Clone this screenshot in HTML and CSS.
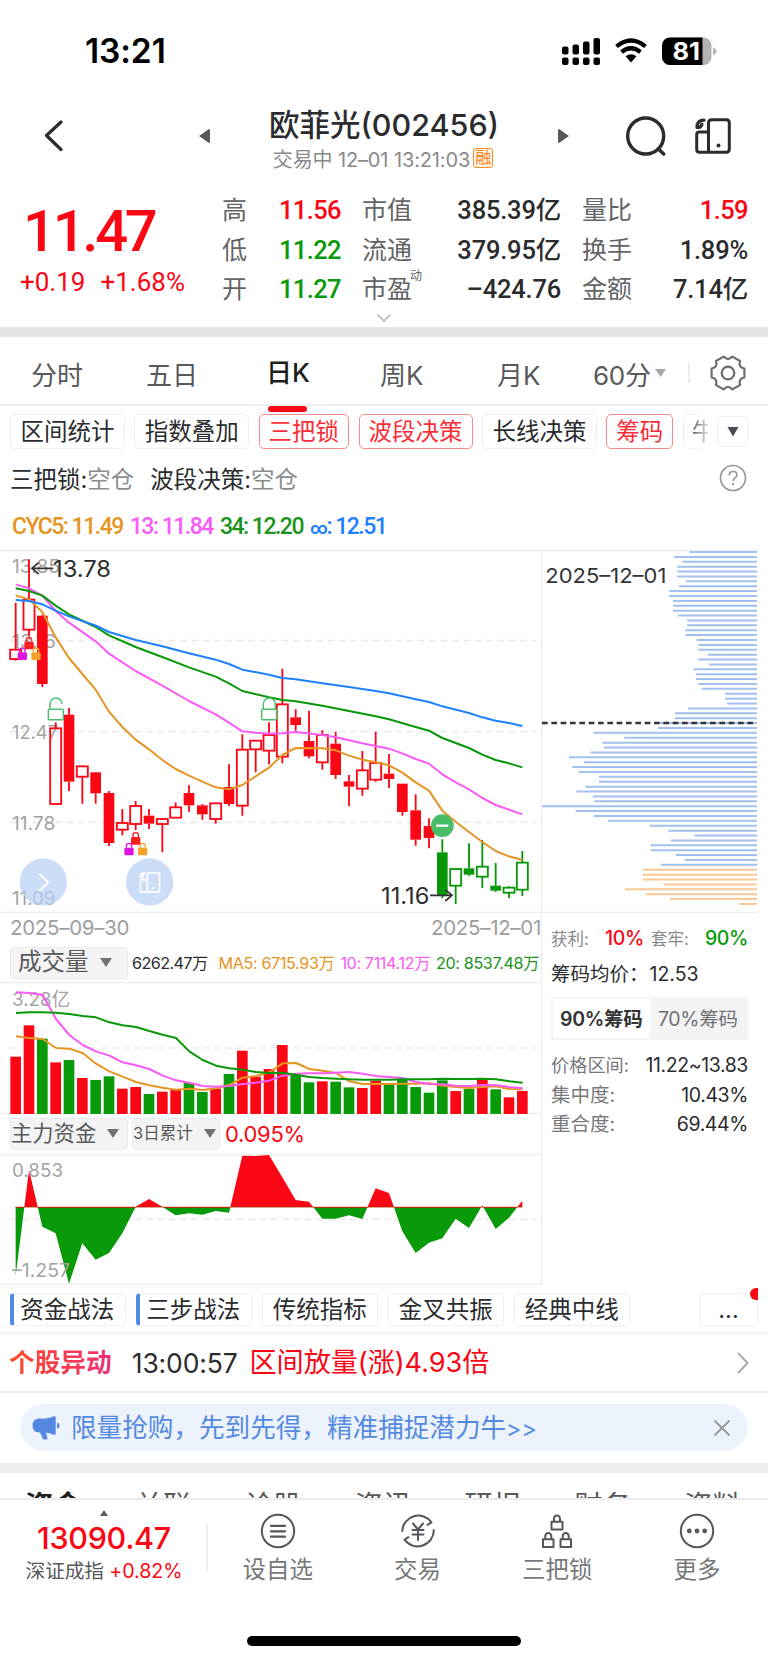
FILE: index.html
```html
<!DOCTYPE html>
<html lang="zh-CN">
<head>
<meta charset="utf-8">
<title>欧菲光(002456)</title>
<link rel="stylesheet" href="styles.css">
</head>
<body>
<svg class="defs" width="0" height="0">
  <symbol id="phones" viewBox="0 0 36 36">
    <path d="M13.500 14V5q0-3.200 3.200-3.200h14.600q3 0 3 3.200v26q0 3.200-3 3.200H4.700q-3 0-3-3V16.500q0-2.500 2.500-2.500h9.300v20" fill="none" stroke="currentColor" stroke-width="3"/>
    <path d="M2 9.500C2 4.500 4.500 2.200 9 2.200M2.500 9.300c2.500.5 4-.8 4.500-3.300" fill="none" stroke="currentColor" stroke-width="3.200" stroke-linecap="round"/>
    <circle cx="23.500" cy="27.500" r="2" fill="currentColor"/>
  </symbol>
</svg>

<div class="statusbar">
  <span class="clock">13:21</span>
  <svg class="status-icons" width="156" height="30" viewBox="0 0 156 30">
    <g fill="#000">
      <rect x="1" y="9.500" width="6.500" height="8" rx="2"/><rect x="11.500" y="7.500" width="6.500" height="10" rx="2"/><rect x="22" y="4.500" width="6.500" height="13" rx="2"/><rect x="32.500" y="1" width="6.500" height="16.500" rx="2"/>
      <rect x="1" y="20.500" width="6.500" height="7.500" rx="2"/><rect x="11.500" y="20.500" width="6.500" height="7.500" rx="2"/><rect x="22" y="20.500" width="6.500" height="7.500" rx="2"/><rect x="32.500" y="20.500" width="6.500" height="7.500" rx="2"/>
    </g>
    <path d="M55.500 9.500q14.500-12 29 0M60.500 15q9.500-7.500 19 0" fill="none" stroke="#000" stroke-width="4.200"/>
    <path d="M64.500 19.300q5.500-4.200 11 0L70 25.500z" fill="#000"/>
    <clipPath id="bat"><rect x="101" y="0.500" width="49.500" height="27.500" rx="8"/></clipPath>
    <g clip-path="url(#bat)"><rect x="101" width="50" height="29" fill="#b3b3b3"/><rect x="101" width="40.500" height="29" fill="#000"/></g>
    <path d="M152 10.500q3.500 1 3.500 3.700t-3.500 3.700z" fill="#b3b3b3"/>
    <text x="111.500" y="22.800" class="bat-text" textLength="27.500" lengthAdjust="spacingAndGlyphs">81</text>
  </svg>
</div>

<header class="header">
  <svg class="back" width="20" height="32" viewBox="0 0 20 32"><path d="M17 2L2.500 15.500 17 29.500" fill="none" stroke="#2b2c2e" stroke-width="3.200" stroke-linecap="round" stroke-linejoin="round"/></svg>
  <svg class="prev" width="12" height="16" viewBox="0 0 12 16"><path d="M0 8L9.500 1.200q1.500-.8 1.500 1v11.600q0 1.800-1.500 1z" fill="#58595b"/></svg>
  <div class="title">
    <h1>欧菲光(002456)</h1>
    <p><span>交易中 12–01 13:21:03</span><b class="rong">融</b></p>
  </div>
  <svg class="next" width="12" height="16" viewBox="0 0 12 16"><path d="M11 8L1.500 1.200Q0 .4 0 2.200v11.600q0 1.800 1.500 1z" fill="#58595b"/></svg>
  <svg class="search" width="40" height="40" viewBox="0 0 40 40"><g fill="none" stroke="#2b2c2e" stroke-width="3.400" stroke-linecap="round"><circle cx="19.700" cy="20" r="18"/><path d="M33 33.500l4.700 4.500"/></g></svg>
  <svg class="phones" width="36" height="36"><use href="#phones"/></svg>
</header>

<section class="quote">
  <div class="price">
    <strong>11.47</strong>
    <div><span>+0.19</span><span>+1.68%</span></div>
  </div>
  <div class="stats">
    <i>高</i><b class="r">11.56</b><i>市值</i><b>385.39亿</b><i>量比</i><b class="r">1.59</b>
    <i>低</i><b class="g">11.22</b><i>流通</i><b>379.95亿</b><i>换手</i><b>1.89%</b>
    <i>开</i><b class="g">11.27</b><i>市盈<sup>动</sup></i><b>–424.76</b><i>金额</i><b>7.14亿</b>
  </div>
</section>
<div class="expander"><svg width="14" height="8" viewBox="0 0 14 8"><path d="M.8.8L7 7 13.200.8" fill="none" stroke="#aaa" stroke-width="1.400"/></svg></div>
<div class="band"></div>

<nav class="periods">
  <span>分时</span><span>五日</span><span class="on">日K</span><span>周K</span><span>月K</span>
  <span class="min">60分<svg width="11" height="9" viewBox="0 0 11 9"><path d="M0 0h11L5.500 8z" fill="#aaa"/></svg></span>
  <em></em>
  <svg class="gear" width="36" height="36" viewBox="-18 -18 36 36"><g fill="none" stroke="#6c6d70" stroke-width="2.200"><path stroke-linejoin="round" d="M16.400-4.400V4.400Q10 5.800 12 12L4.400 16.400Q0 11.500-4.400 16.400L-12 12Q-10 5.800-16.400 4.400V-4.400Q-10-5.800-12-12L-4.400-16.400Q0-11.500 4.400-16.400L12-12Q10-5.800 16.400-4.400z"/><circle r="6.300"/></g></svg>
</nav>

<div class="chips">
  <span>区间统计</span><span>指数叠加</span><span class="sel">三把锁</span><span class="sel">波段决策</span><span>长线决策</span><span class="sel">筹码</span>
  <span class="cut">牛</span>
  <span class="drop"><svg width="12" height="10" viewBox="0 0 12 10"><path d="M.5 0h11L6 9.500z" fill="#4a4b50"/></svg></span>
</div>

<div class="lockstate">
  <span>三把锁:<i>空仓</i></span><span>波段决策:<i>空仓</i></span>
  <svg width="28" height="28" viewBox="0 0 28 28"><circle cx="14" cy="14" r="12.500" fill="none" stroke="#999" stroke-width="1.700"/><path d="M10.300 11.400q0-3.900 3.800-3.900t3.800 3.500q0 1.700-2 3-1.800 1.200-1.800 3" fill="none" stroke="#999" stroke-width="1.700"/><circle cx="14.100" cy="20" r="1.200" fill="#999"/></svg>
</div>

<div class="cyc">
  <span class="o">CYC5: 11.49</span><span class="p">13: 11.84</span><span class="gr">34: 12.20</span><span class="bl"><small>∞</small>: 12.51</span>
</div>

<main class="board">
  <div class="left">
    <svg id="kline" class="kline" width="542" height="363" viewBox="0 15 1626 1089"></svg>
    <div class="dates"><span>2025–09–30</span><span>2025–12–01</span></div>
    <div class="bar vbar">
      <span class="sel1 big">成交量<svg width="12" height="9" viewBox="0 0 12 9"><path d="M0 0h12L6 9z" fill="#707173"/></svg></span>
      <span class="k">6262.47万</span><span class="o">MA5: 6715.93万</span><span class="p">10: 7114.12万</span><span class="gr">20: 8537.48万</span>
    </div>
    <svg id="volume" class="volume" width="542" height="132" viewBox="0 216 1626 396"></svg>
    <div class="bar mbar">
      <span class="sel1">主力资金<svg width="12" height="9" viewBox="0 0 12 9"><path d="M0 0h12L6 9z" fill="#707173"/></svg></span>
      <span class="sel2">3日累计<svg width="12" height="9" viewBox="0 0 12 9"><path d="M0 0h12L6 9z" fill="#707173"/></svg></span>
      <span class="pct">0.095%</span>
    </div>
    <svg id="money" class="money" width="542" height="131" viewBox="0 132 1626 393"></svg>
  </div>
  <aside class="right">
    <svg id="dist" class="dist" width="216" height="363" viewBox="36 15 648 1089"></svg>
    <div class="info">
      <div class="pl"><i>获利:</i><b class="r">10%</b><i>套牢:</i><b class="g">90%</b></div>
      <div class="avg"><span>筹码均价：</span><span>12.53</span></div>
      <div class="seg"><b>90%筹码</b><span>70%筹码</span></div>
      <dl>
        <dt class="tight">价格区间:</dt><dd>11.22~13.83</dd>
        <dt>集中度:</dt><dd>10.43%</dd>
        <dt>重合度:</dt><dd>69.44%</dd>
      </dl>
    </div>
  </aside>
</main>

<div class="methods">
  <span class="hot">资金战法</span><span class="hot">三步战法</span><span>传统指标</span><span>金叉共振</span><span>经典中线</span>
  <span class="more">...<u></u></span>
</div>

<div class="alert">
  <strong>个股异动</strong><time>13:00:57</time><span>区间放量(涨)4.93倍</span>
  <svg width="12" height="22" viewBox="0 0 12 22"><path d="M1 1l9.500 10L1 21" fill="none" stroke="#aaa" stroke-width="2"/></svg>
</div>

<div class="promo-wrap"><div class="promo">
  <svg width="28" height="24" viewBox="0 0 28 24"><path d="M7 2.500C13 3 18 2 22 .3q1.700-.6 1.700 1v16.400q0 1.600-1.700 1-3.500-1.600-8-1.900l1.500 5.200q.3 1.500-1.200 1.500h-2q-1.200 0-1.700-1.200L8 16.500H7q-6.500-.5-6.500-7t6.500-7z" fill="#5389e0"/><path d="M25 6.500q2.500.5 2.500 3T25 12.500z" fill="#5389e0"/></svg>
  <span>限量抢购，先到先得，精准捕捉潜力牛<small>&gt;&gt;</small></span>
  <svg width="18" height="18" viewBox="0 0 18 18"><path d="M1.500 1.500l15 15M16.500 1.500l-15 15" stroke="#999" stroke-width="2"/></svg>
</div></div>
<div class="band low"></div>

<div class="subtabs"><b>资金</b><span>关联</span><span>诊股</span><span>资讯</span><span>研报</span><span>财务</span><span>资料</span></div>

<footer class="tabbar">
  <div class="index">
    <svg width="8" height="6" viewBox="0 0 8 6"><path d="M4 0l4 6H0z" fill="#58595b"/></svg>
    <strong>13090.47</strong>
    <p>深证成指 <b>+0.82%</b></p>
  </div>
  <div class="tab"><svg width="36" height="36" viewBox="-18 -18 36 36"><g class="ln"><circle r="16.200"/><path d="M-7-5.200H7M-7 .3H7M-7 5.700H7" stroke-width="2.300"/></g></svg><span>设自选</span></div>
  <div class="tab"><svg width="36" height="36" viewBox="-18 -18 36 36"><g class="ln"><path d="M-15.800 0A16.200 16.200 0 0 1 13.500-8.700l-4 2.500M15.800-1A16.200 16.200 0 0 1-13.500 8.700l4-2.500"/><path d="M-5-7.500L0-1.500 5-7.500M0-1.500V9M-5.500-1H5.500M-5.500 3.500H5.500"/></g></svg><span>交易</span></div>
  <div class="tab"><svg width="36" height="36" viewBox="-18 -18 36 36"><g class="ln"><path d="M-5.500-9.200H5.500V-1.500H-5.500zM-3-9.200v-3a3 3.200 0 0 1 6 0v3M-14 8.300H-3.500V16H-14zM-11.700 8.300v-3a3 3.200 0 0 1 6 0v3M3.500 8.300H14V16H3.500zM5.700 8.300v-3a3 3.200 0 0 1 6 0v3"/></g></svg><span>三把锁</span></div>
  <div class="tab"><svg width="36" height="36" viewBox="-18 -18 36 36"><g class="ln"><circle r="16.200"/></g><g fill="#55565b"><circle cx="-7.700" r="2.400"/><circle r="2.400"/><circle cx="7.700" r="2.400"/></g></svg><span>更多</span></div>
</footer>
<div class="home"></div>
<script src="charts.js"></script>
</body>
</html>
```

FILE: charts.js
```js
const RED = '#fa0614', GREEN = '#089708', ORANGE = '#e59524', PINK = '#fa5af5', BLUE = '#1f80ff';
const cx = i => 47 + 40 * i;
const line = (pts, c, w = 6) => `<polyline points="${pts.map(p => p.join()).join(' ')}" fill="none" stroke="${c}" stroke-width="${w}" stroke-linejoin="round"/>`;
const dash = y => `<path d="M30 ${y}H1612" stroke="#ebebee" stroke-width="5" stroke-dasharray="20 14"/>`;
const text = (s, x, y, size, len, c = '#a3a3a5') => `<text x="${x}" y="${y}" font-size="${size}" textLength="${len}" lengthAdjust="spacingAndGlyphs" fill="${c}">${s}</text>`;
const lock = (x, y, c) => `<g fill="${c}"><rect x="${x - 14}" y="${y}" width="28" height="23" rx="4"/><path d="M${x - 8} ${y}v-5a8 8 0 0 1 16 0v5" fill="none" stroke="${c}" stroke-width="4"/></g>`;
const locks = (x, y) => lock(x, y, '#fa1e1e') + lock(x - 20, y + 32, '#dc14dc') + lock(x + 21, y + 32, '#f5a228');

// [style, high, body top, body bottom, low]
const candles = [
  ['h',173,314,342,347],['h',43,164,254,272],['f',209,212,417,426],['h',532,550,777,777],['f',489,509,710,738],
  ['h',662,664,695,776],['f',682,682,745,776],['f',738,744,894,903],['h',792,834,854,871],['h',768,783,837,855],
  ['f',792,812,836,852],['h',820,822,837,922],['h',772,787,818,818],['f',721,744,781,800],['f',777,781,808,824],
  ['h',775,775,822,836],['f',658,726,777,783],['h',568,614,782,812],['h',586,587,613,682],['h',532,570,617,658],
  ['h',371,478,635,655],['f',493,517,540,557],['f',497,588,634,640],['h',556,570,652,674],['f',560,596,690,702],
  ['f',690,709,725,784],['h',618,676,731,752],['h',560,654,704,710],['f',627,686,702,729],['f',716,716,801,812],
  ['f',748,796,884,902],['f',820,843,879,910],['F',883,922,1050,1060],['H',970,972,1022,1077],['F',895,970,989,993],
  ['H',885,965,995,1029],['F',954,1022,1037,1041],['H',1024,1028,1043,1060],['H',918,953,1034,1053]];
const ma = {
  blue: [[47,165],[87,168],[127,178],[167,197],[207,214],[290,243],[327,261],[407,285],[487,304],[567,325],[647,344],[687,357],[727,374],[807,389],[847,399],[887,403],[967,415],[1047,426],[1127,438],[1167,445],[1247,463],[1287,471],[1327,484],[1407,504],[1447,517],[1487,527],[1527,534],[1567,543]],
  green: [[47,130],[87,138],[127,152],[167,182],[207,208],[287,246],[327,271],[407,306],[487,336],[567,367],[647,395],[687,415],[727,438],[807,457],[847,465],[887,469],[967,482],[1047,498],[1127,514],[1167,523],[1247,546],[1287,557],[1327,579],[1407,609],[1447,629],[1487,645],[1527,655],[1567,667]],
  pink: [[47,118],[87,130],[127,152],[167,198],[207,233],[287,289],[327,326],[407,378],[487,422],[567,468],[647,508],[687,533],[727,559],[767,563],[807,566],[847,565],[887,561],[967,570],[1007,577],[1087,595],[1167,611],[1207,625],[1247,642],[1287,656],[1327,688],[1367,712],[1407,733],[1447,759],[1487,780],[1567,808]],
  orange: [[47,151],[87,163],[127,201],[167,277],[207,339],[247,387],[287,434],[327,500],[367,546],[407,584],[447,613],[487,645],[527,672],[567,692],[607,710],[647,727],[687,733],[727,720],[767,694],[807,668],[847,630],[887,609],[967,610],[1007,616],[1047,632],[1087,644],[1127,652],[1167,661],[1207,683],[1247,712],[1287,737],[1327,797],[1367,830],[1407,861],[1447,891],[1487,918],[1527,934],[1567,945]]
};
const frame = (y0, y1) => `<path d="M0 ${y0 + 1.5}H1626M0 ${y1 - 1.5}H1626" stroke="#ececee" stroke-width="4"/>`;

let s = frame(15, 1104) + dash(287) + dash(560) + dash(832);
s += text('13.85', 36, 83, 57, 144) + text('13.16', 36, 309, 57, 132) + text('12.47', 36, 583, 57, 138) + text('11.78', 36, 855, 57, 130) + text('11.09', 36, 1080, 57, 130);
candles.forEach(([t, hi, a, b, lo], i) => {
  const x = cx(i), c = t === t.toUpperCase() ? GREEN : RED, fill = t.toLowerCase() === 'f';
  s += `<path d="M${x} ${hi}V${a}M${x} ${b}V${lo}" stroke="${c}" stroke-width="5.500"/>`;
  s += fill ? `<rect x="${x - 16}" y="${a}" width="32" height="${b - a}" fill="${c}"/>`
            : `<rect x="${x - 16.5}" y="${a}" width="33" height="${b - a}" fill="none" stroke="${c}" stroke-width="5.500"/>`;
});
s += line(ma.pink, PINK) + line(ma.green, GREEN) + line(ma.orange, ORANGE) + line(ma.blue, BLUE);
s += locks(87, 290) + locks(407, 876);
[167, 807].forEach((x, k) => {
  s += `<g fill="none" stroke="#4cc06c" stroke-width="4.500"><rect x="${x - 22}" y="493" width="45" height="31" rx="3"/><path d="M${x - 17} 493v-16a18 18 0 0 1 36 0v${k ? 16 : 0}"/></g>`;
});
s += `<circle cx="1327" cy="842" r="34" fill="#47bd66"/><path d="M1309 842h36" stroke="#fff" stroke-width="7"/>`;
s += `<path d="M160 70H96M116 53L96 70l20 17" fill="none" stroke="#333" stroke-width="5"/>` + text('13.78', 159, 97, 68, 174, '#2c2d2f');
s += text('11.16', 1143, 1076, 68, 145, '#2c2d2f') + `<path d="M1290 1051h66M1336 1034l20 17-20 17" fill="none" stroke="#333" stroke-width="5"/>`;
s += `<g fill="#b9d0f5" fill-opacity=".72"><circle cx="130" cy="1011" r="71"/><circle cx="449" cy="1011" r="71"/></g><path d="M118 986l27 26-27 26" fill="none" stroke="#fff" stroke-width="6"/><use href="#phones" x="418" y="980" width="64" height="64" style="color:#fff"/>`;
document.getElementById('kline').innerHTML = s;

const bars = [440,346,386,457,450,504,510,499,536,531,552,545,537,519,546,536,492,422,500,477,405,494,517,514,515,532,534,512,521,510,531,548,511,543,537,508,538,562,543];
const barColors = 'rrgrgrggrrgrrggrgrrrrggrggrrgggggrgrgrr';
const vol = {
  orange: [379,384,387,414,416,429,461,484,500,516,526,533,539,536,540,535,525,503,498,487,460,459,477,482,489,514,522,521,522,521,521,520,527,531,534,531,529,537,538],
  pink: [247,249,255,327,375,405,424,437,457,466,477,497,511,518,528,530,528,522,518,512,497,491,490,490,488,486,491,498,501,504,516,522,523,527,528,525,526,531,535],
  green: [309,307,307,308,312,318,322,337,346,351,363,374,384,424,450,467,475,479,486,489,488,494,501,504,506,508,509,509,509,508,508,508,506,507,507,506,508,514,518]
};
s = frame(216, 612) + dash(414) + text('3.28亿', 36, 288, 57, 175);
bars.forEach((y, i) => { s += `<rect x="${cx(i) - 16}" y="${y}" width="32" height="${612 - y}" fill="${barColors[i] === 'r' ? RED : '#089a08'}"/>`; });
const byIndex = a => a.map((y, i) => [cx(i) + 1, y]);
s += line(byIndex(vol.orange), ORANGE) + line(byIndex(vol.pink), PINK) + line(byIndex(vol.green), GREEN);
document.getElementById('volume').innerHTML = s;

const flow = [498,180,350,370,521,400,449,429,370,290,267,290,316,310,314,303,308,137,138,135,202,270,275,326,326,316,327,235,249,364,429,398,385,326,354,286,357,323,272];
const area = `M47 291L${flow.map((y, i) => [cx(i), y].join()).join(' ')}L1567 291z`;
s = frame(132, 525) + dash(328);
s += `<clipPath id="up"><rect y="130" width="1626" height="163"/></clipPath><clipPath id="dn"><rect y="290" width="1626" height="240"/></clipPath>`;
s += `<path d="${area}" fill="#089a08" clip-path="url(#dn)"/><path d="${area}" fill="${RED}" clip-path="url(#up)"/><path d="M47 291.500H1567" stroke="#a33a08" stroke-width="2"/>`;
s += text('0.853', 36, 201, 57, 153) + text('–1.257', 36, 502, 57, 174);
document.getElementById('money').innerHTML = s;

const dist = [478,432,457,441,441,441,468,447,417,417,429,429,429,444,471,471,466,466,500,505,505,534,505,537,490,498,498,505,515,585,585,591,474,435,435,385,384,191,283,217,222,181,117,162,127,147,207,207,166,139,189,193,36,137,191,234,359,415,493,423,363,363,437,464,393,339,339,339,401,285,349,420,627];
s = `<path d="M36 16.500H684M36 1102.500H684" stroke="#ececee" stroke-width="4"/>`;
dist.forEach((x, i) => { s += `<path d="M${x} ${21 + 14.665 * i}H681" stroke="${i < 65 ? '#a2c1f1' : '#fcc796'}" stroke-width="6"/>`; });
s += `<path d="M36 534H676" stroke="#333" stroke-width="7" stroke-dasharray="17 11"/>` + text('2025–12–01', 46, 113, 62, 363, '#333436');
document.getElementById('dist').innerHTML = s;
```

FILE: styles.css
```css
* { box-sizing: border-box; }
body { margin: 0; width: 768px; height: 1663px; overflow: hidden; background: #fff; color: #2b2c2e; font-family: Inter, "Noto Sans CJK SC", sans-serif; font-size: 23.5px; }
i, em { font-style: normal; }
svg { display: block; flex: none; }
.defs { position: absolute; }
h1, p, dl, dd { margin: 0; }
.r { color: #fa0614; }
.g { color: #089a08; }
.o { color: #e59524; }
.p { color: #fa5af5; }
.gr { color: #1c931c; }
.bl { color: #1f80ff; }

.statusbar { height: 100px; display: flex; justify-content: space-between; padding: 37px 51px 0 85px; color: #000; }
.clock { font-weight: 600; font-size: 33.5px; line-height: 29px; letter-spacing: -.1px; }
.bat-text { font: 700 24px Inter, sans-serif; fill: #fff; }

.header { height: 90px; display: grid; grid-template-columns: 44px 167px 49px 248px 50px 68px 69px 73px; align-items: start; }
.header > * { grid-row: 1; }
.back { margin-top: 20px; grid-column: 2; }
.prev { margin-top: 28px; grid-column: 2; justify-self: end; }
.title { grid-column: 4; text-align: center; white-space: nowrap; }
.title h1 { font-weight: 500; font-size: 30.5px; line-height: 45px; margin-top: 2px; }
.title p { display: flex; justify-content: center; align-items: center; height: 22px; padding-right: 2px; font-size: 20px; color: #88898b; letter-spacing: -.12px; }
.rong { width: 20px; height: 20px; margin-left: 3px; border: 1.5px solid #fa8c28; border-radius: 3px; color: #fa8420; font-size: 16px; line-height: 16px; font-weight: 400; letter-spacing: 0; background: #fff3e6; }
.next { margin-top: 28px; grid-column: 6; }
.search { margin-top: 16px; grid-column: 7; }
.phones { margin-top: 18px; grid-column: 8; color: #2b2c2e; }

.quote { height: 119px; display: flex; font-family: Roboto, "Noto Sans CJK SC", sans-serif; }
.price { width: 222px; color: #fa0614; padding-left: 20px; }
.price strong { display: block; font-weight: 500; font-size: 58px; line-height: 60px; margin: 11px 0 0 3px; letter-spacing: -3.3px; }
.price div { display: flex; gap: 15px; margin-top: 6px; font-size: 26px; line-height: 30px; letter-spacing: 0; }
.stats { display: grid; grid-template-columns: 50px 69px 102px 118px 102px 85px; grid-auto-rows: 39.5px; align-items: center; line-height: 39px; padding-top: 1px; }
.stats i { color: #636466; font-size: 25px; position: relative; }
.stats i:not(:nth-child(6n+1)) { padding-left: 21px; }
.stats b { font-weight: 500; font-size: 25.5px; text-align: right; letter-spacing: -.2px; white-space: nowrap; }
.stats .r, .stats .g { letter-spacing: -.6px; }
.stats sup { position: absolute; left: 69px; top: -9px; font-size: 12px; line-height: 30px; }
.expander { height: 18px; display: flex; justify-content: center; padding-top: 5px; }
.band { height: 10px; background: #e5e5e8; }
.band.low { background: #ededef; }

.periods { height: 69px; border-bottom: 2px solid #efeff1; display: grid; grid-template-columns: 31px 115px 120px 114px 117px 96px 95px 22px 58px; align-items: center; color: #58595b; font-size: 26px; padding-top: 1px; }
.periods span:first-child { grid-column: 2; }
.periods .on { color: #1d1e20; font-weight: 500; position: relative; align-self: stretch; line-height: 70px; }
.periods .on::after { content: ""; position: absolute; left: 2px; bottom: -4px; width: 39px; height: 6px; border-radius: 3px; background: #fa0614; }
.periods .min { display: flex; align-items: center; gap: 4px; letter-spacing: -.3px; }
.periods em { width: 2px; height: 20px; background: #ececee; }

.chips { height: 51px; padding: 8px 20px 0 10px; display: flex; gap: 9.5px; line-height: 34px; white-space: nowrap; }
.chips span { height: 35px; border: 1.5px solid #efeff0; border-radius: 5px; padding: 0 9.4px; }
.chips .sel { color: #fa2d38; border-color: #fb8a90; padding: 0 9px; }
.chips .cut { width: 25px; padding: 0 0 0 8px; overflow: hidden; border-right: 0; border-radius: 5px 0 0 5px; -webkit-mask: linear-gradient(90deg, #000 10%, transparent 115%); mask: linear-gradient(90deg, #000 10%, transparent 115%); }
.chips .drop { width: 31px; height: 31px; margin: 2px 0 0 auto; padding: 0; display: flex; align-items: center; justify-content: center; }

.lockstate { height: 42px; padding: 0 21px 0 10px; display: flex; align-items: center; gap: 16px; white-space: nowrap; }
.lockstate i { color: #8b8c8e; }
.lockstate svg { margin-left: auto; }
.cyc { height: 51px; padding: 4px 0 0 12px; display: flex; align-items: center; gap: 7px; font: 500 23px Roboto, "Noto Sans CJK SC", sans-serif; letter-spacing: -1.5px; white-space: pre; }
.cyc small { font-size: 17px; font-weight: 700; }

.board { display: flex; height: 735px; }
.board svg text { font-family: Inter, "Noto Sans CJK SC", sans-serif; }
.left { width: 542px; border-right: 1.5px solid #ececee; }
.right { width: 216px; }
.dates { height: 33px; display: flex; justify-content: space-between; padding: 0 0 0 10px; line-height: 30px; font-size: 20.5px; color: #9d9ea0; letter-spacing: -.3px; }
.bar { display: flex; padding-left: 10px; white-space: nowrap; }
.vbar { height: 36px; padding-top: 1px; font-size: 16.2px; line-height: 32px; letter-spacing: -.38px; }
.sel1, .sel2 { flex: none; height: 32px; padding-bottom: 2px; background: #f4f4f5; border: 1px solid #ececee; border-radius: 4px; color: #58595b; display: flex; align-items: center; line-height: 28px; letter-spacing: 0; }
.sel1 { width: 118px; font-size: 21.3px; gap: 11px; }
.sel1.big { font-size: 23.5px; padding-left: 7px; gap: 11px; }
.sel2 { width: 88px; margin-left: 4px; font-size: 16.5px; gap: 11px; }
.vbar .k { margin-left: 4px; letter-spacing: -.6px; }
.vbar .o { margin-left: 11px; }
.vbar .p { margin-left: 6px; }
.vbar .gr { margin-left: 6px; }
.mbar { height: 40px; padding-top: 4px; }
.pct { margin-left: 5px; color: #fa0614; font-size: 22px; line-height: 32px; letter-spacing: -.3px; }

.info { padding: 11px 14px 0 9px; white-space: nowrap; }
.pl { width: 197px; display: flex; align-items: center; height: 27px; }
.pl i { color: #88898b; font-size: 16.5px; }
.pl b { font-weight: 500; margin-left: auto; font-size: 19.5px; letter-spacing: -.4px; }
.pl b + i { margin-left: 7px; }
.avg { height: 46px; line-height: 47px; font-size: 19.5px; display: flex; gap: 1px; }
.seg { height: 43px; width: 197px; background: #f4f4f5; padding: 2px; display: flex; font-size: 19.5px; line-height: 40px; text-align: center; letter-spacing: -.3px; }
.seg > * { flex: 1; }
.seg b { background: #fff; font-weight: 600; color: #333; }
.seg span { color: #707173; }
.info dl { display: grid; grid-template-columns: auto auto; justify-content: space-between; grid-auto-rows: 29.5px; line-height: 29px; padding-top: 11px; width: 197px; font-size: 19.5px; }
.info dt { color: #77787a; }
.info dt.tight { font-size: 18.2px; }
.info dd { text-align: right; letter-spacing: -.4px; }

.methods { height: 49px; border-bottom: 2px solid #f2f2f4; padding: 8px 10px 0 10px; display: flex; gap: 10.5px; white-space: nowrap; line-height: 32px; }
.methods span { width: 115.5px; height: 33px; border: 1.5px solid #efeff0; border-radius: 4px; text-align: center; }
.methods .hot { border-left: 4px solid #4e8ae6; padding-right: 4px; }
.methods .more { margin-left: auto; width: 59px; position: relative; }
.methods u { position: absolute; right: -1px; top: -6px; width: 8px; height: 12px; border-radius: 6px 0 0 6px; background: #fa0614; }

.alert { height: 59px; border-bottom: 2px solid #ececee; display: flex; align-items: center; padding: 0 19px 0 9px; font-size: 26.5px; line-height: 54px; white-space: nowrap; }
.alert strong { font-size: 25.7px; background: linear-gradient(90deg, #ff4a28, #f02f72); -webkit-background-clip: text; background-clip: text; color: transparent; }
.alert time { margin-left: 20px; letter-spacing: -.15px; }
.alert span { margin-left: 12px; color: #fa0614; font-size: 27.2px; letter-spacing: -.1px; }
.alert svg { margin-left: auto; }

.promo-wrap { height: 70px; padding: 11px 20px 0; }
.promo { height: 47px; border-radius: 24px; background: #edf3fc; color: #5389e0; display: flex; align-items: center; padding: 0 17px 0 12px; font-size: 25.6px; line-height: 44px; white-space: nowrap; }
.promo span { margin: 1px 0 0 11px; }
.promo small { font-size: 23.3px; }
.promo svg:last-child { margin-left: auto; }

.subtabs { height: 25px; overflow: hidden; display: flex; justify-content: space-between; padding: 12px 27px 0 25px; font-size: 28.5px; line-height: 41px; color: #58595b; }
.subtabs b { color: #1d1e20; }
.tabbar { height: 138px; border-top: 2px solid #ececee; display: grid; grid-template-columns: 208px 139.7px 139.7px 139.7px 139.7px; position: relative; background: #fff; }
.index { display: flex; flex-direction: column; align-items: center; padding-top: 10px; height: 90px; color: #333; position: relative; }
.index::after { content: ""; position: absolute; right: 0; top: 23px; width: 2px; height: 48px; background: #f0f0f2; }
.index strong { font-weight: 500; font-size: 30.5px; line-height: 34px; margin-top: 5px; color: #fa0614; letter-spacing: -.3px; }
.index p { font-size: 19.7px; line-height: 33px; white-space: nowrap; letter-spacing: -.1px; color: #58595b; }
.index b { font-weight: 400; color: #fa0614; }
.tab { display: flex; flex-direction: column; align-items: center; padding-top: 13px; color: #77787a; }
.tab span { line-height: 36px; margin-top: 3px; }
.ln { fill: none; stroke: #55565b; stroke-width: 2; stroke-linecap: round; stroke-linejoin: round; }
.home { width: 274px; height: 10px; border-radius: 5px; background: #000; margin: 0 auto; }
```
